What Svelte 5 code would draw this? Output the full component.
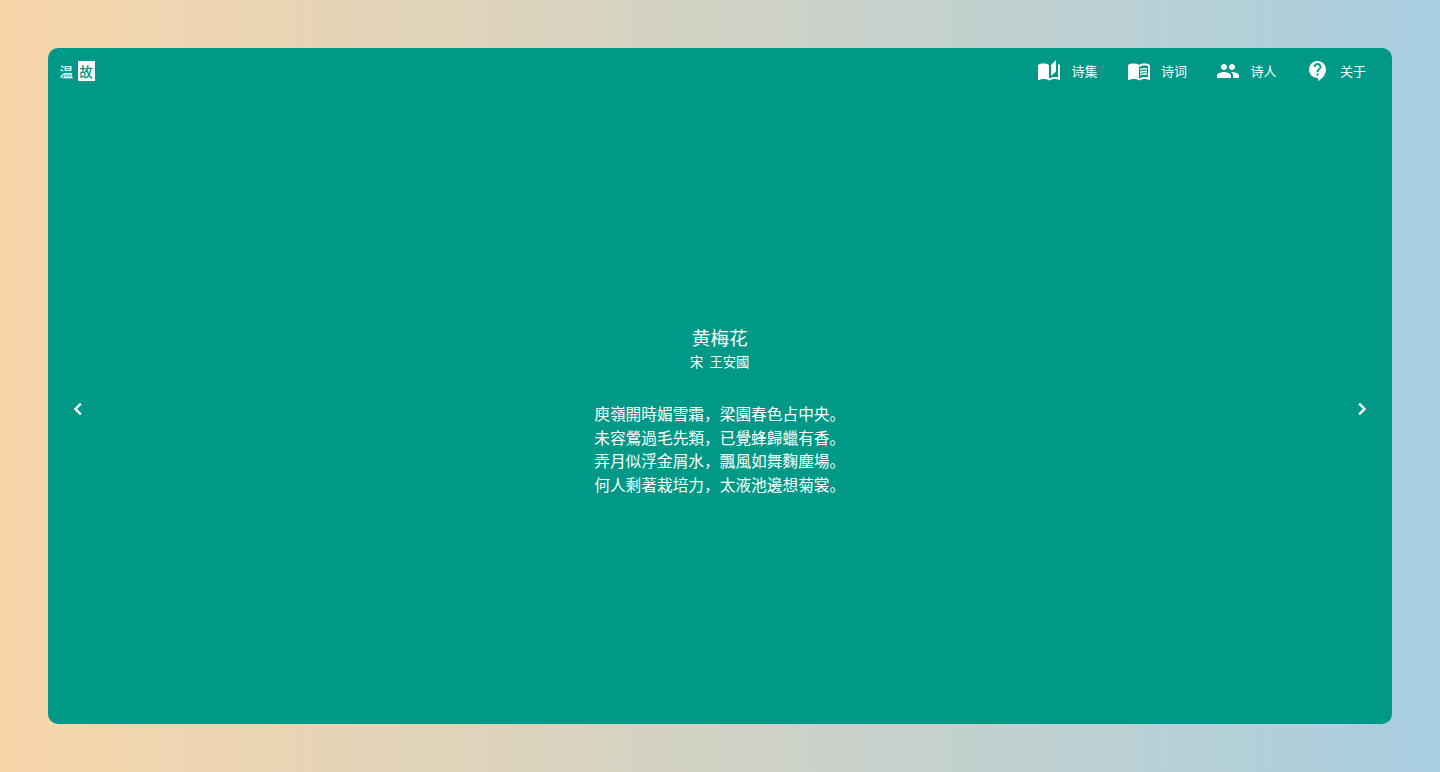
<script>
  const nav = [
    { label: '诗集', paths: ['M19 1l-5 5v11l5-4.5V1zM1 6v14.65c0 .25.25.5.5.5.1 0 .15-.05.25-.05C3.1 20.45 5.05 20 6.5 20c1.95 0 4.05.4 5.5 1.5V6c-1.45-1.1-3.55-1.5-5.5-1.5S2.45 4.9 1 6zm22 13.5V6c-.6-.45-1.25-.75-2-1v13.5c-1.1-.35-2.3-.5-3.5-.5-1.7 0-4.15.65-5.5 1.5v2c1.35-.85 3.8-1.5 5.5-1.5 1.65 0 3.35.3 4.75 1.05.1.05.15.05.25.05.25 0 .5-.25.5-.5v-1.1z'] },
    { label: '诗词', paths: ['M21 5c-1.11-.35-2.33-.5-3.5-.5-1.95 0-4.05.4-5.5 1.5-1.45-1.1-3.55-1.5-5.5-1.5S2.45 4.9 1 6v14.65c0 .25.25.5.5.5.1 0 .15-.05.25-.05C3.1 20.45 5.05 20 6.5 20c1.95 0 4.05.4 5.5 1.5 1.35-.85 3.8-1.5 5.5-1.5 1.65 0 3.35.3 4.75 1.05.1.05.15.05.25.05.25 0 .5-.25.5-.5V6c-.6-.45-1.25-.75-2-1zm0 13.5c-1.1-.35-2.3-.5-3.5-.5-1.7 0-4.15.65-5.5 1.5V8c1.35-.85 3.8-1.5 5.5-1.5 1.2 0 2.4.15 3.5.5v11.5z', 'M17.5 10.5c.88 0 1.73.09 2.5.26V9.24c-.79-.15-1.64-.24-2.5-.24-1.7 0-3.24.29-4.5.83v1.66c1.13-.64 2.7-.99 4.5-.99zM13 12.49v1.66c1.13-.64 2.7-.99 4.5-.99.88 0 1.73.09 2.5.26V11.9c-.79-.15-1.64-.24-2.5-.24-1.7 0-3.24.3-4.5.83zM17.5 14.33c-1.7 0-3.24.29-4.5.83v1.66c1.13-.64 2.7-.99 4.5-.99.88 0 1.73.09 2.5.26v-1.52c-.79-.16-1.64-.24-2.5-.24z'] },
    { label: '诗人', paths: ['M16 11c1.66 0 2.99-1.34 2.99-3S17.66 5 16 5c-1.66 0-3 1.34-3 3s1.34 3 3 3zm-8 0c1.66 0 2.99-1.34 2.99-3S9.66 5 8 5C6.34 5 5 6.34 5 8s1.34 3 3 3zm0 2c-2.33 0-7 1.17-7 3.5V19h14v-2.5c0-2.33-4.67-3.5-7-3.5zm8 0c-.29 0-.62.02-.97.05 1.16.84 1.97 1.97 1.97 3.45V19h6v-2.5c0-2.33-4.67-3.5-7-3.5z'] },
    { label: '关于', paths: ['M11.5 2C6.81 2 3 5.81 3 10.5S6.81 19 11.5 19h.5v3c4.86-2.34 8-7 8-11.5C20 5.81 16.19 2 11.5 2zm1 14.5h-2v-2h2v2zm0-3.5h-2c0-3.25 3-3 3-5 0-1.1-.9-2-2-2s-2 .9-2 2h-2c0-2.21 1.79-4 4-4s4 1.79 4 4c0 2.5-3 2.75-3 5z'] },
  ];

  const lines = [
    '庾嶺開時媚雪霜，梁園春色占中央。',
    '未容鶯過毛先類，已覺蜂歸蠟有香。',
    '弄月似浮金屑水，飄風如舞麴塵場。',
    '何人剩著栽培力，太液池邊想菊裳。',
  ];
</script>

<div class="page">
  <main class="card">
    <header class="top">
      <div class="logo">
        <span class="logo-a">温</span>
        <span class="logo-b">故</span>
      </div>
      <nav class="nav">
        {#each nav as item}
          <a class="nav-item" href="#/">
            <svg class="nav-icon" viewBox="0 0 24 24" fill="currentColor">
              {#each item.paths as d}
                <path {d} />
              {/each}
            </svg>
            <span>{item.label}</span>
          </a>
        {/each}
      </nav>
    </header>

    <section class="body">
      <button class="arrow" aria-label="上一首">
        <svg viewBox="0 0 24 24" fill="currentColor"><path d="M15.41 7.41 14 6l-6 6 6 6 1.41-1.41L10.83 12z" /></svg>
      </button>

      <article class="poem">
        <h1 class="title">黄梅花</h1>
        <p class="author">宋&nbsp;&nbsp;王安國</p>
        <div class="verses">
          {#each lines as line}
            <p>{line}</p>
          {/each}
        </div>
      </article>

      <button class="arrow" aria-label="下一首">
        <svg viewBox="0 0 24 24" fill="currentColor"><path d="M10 6 8.59 7.41 13.17 12l-4.58 4.59L10 18l6-6z" /></svg>
      </button>
    </section>
  </main>
</div>

<style>
  :global(body) {
    margin: 0;
    font-family: "Noto Sans CJK SC", "Noto Sans", sans-serif;
  }

  .page {
    box-sizing: border-box;
    height: 772px;
    padding: 48px 48px 48px 47.5px;
    background: linear-gradient(to right, #f9d6aa, #a8cee0);
  }

  .card {
    box-sizing: border-box;
    height: 100%;
    display: flex;
    flex-direction: column;
    border-radius: 10px;
    background: #009988;
    color: #fff;
  }

  .top {
    display: flex;
    align-items: center;
    justify-content: space-between;
    height: 46px;
    padding: 0 26px 0 12px;
  }

  .logo {
    display: flex;
    align-items: center;
    gap: 4.5px;
    font-size: 13.5px;
    font-weight: 500;
  }

  .logo-b {
    display: flex;
    align-items: center;
    justify-content: center;
    width: 17px;
    height: 20px;
    background: #fff;
    color: #009988;
  }

  .nav {
    display: flex;
    gap: 29.5px;
  }

  .nav-item {
    display: flex;
    align-items: center;
    gap: 10px;
    color: inherit;
    text-decoration: none;
    font-size: 13px;
    line-height: 24px;
  }

  .nav-icon {
    width: 24px;
    height: 24px;
  }

  .body {
    flex: 1;
    display: flex;
    align-items: center;
    justify-content: space-between;
    padding: 0 18.5px;
  }

  .arrow {
    display: flex;
    width: 24px;
    height: 24px;
    padding: 0;
    border: 0;
    background: none;
    color: inherit;
  }

  .arrow path {
    stroke: currentColor;
    stroke-width: 0.5;
  }

  .poem {
    text-align: center;
    margin-top: 1px;
  }

  .title {
    margin: 0;
    font-size: 18.7px;
    font-weight: 400;
    line-height: 28px;
  }

  .author {
    margin: 0 0 29.5px;
    font-size: 13.33px;
    line-height: 22px;
  }

  .verses p {
    margin: 0;
    font-size: 15.7px;
    font-weight: 400;
    line-height: 23.6px;
  }
</style>
